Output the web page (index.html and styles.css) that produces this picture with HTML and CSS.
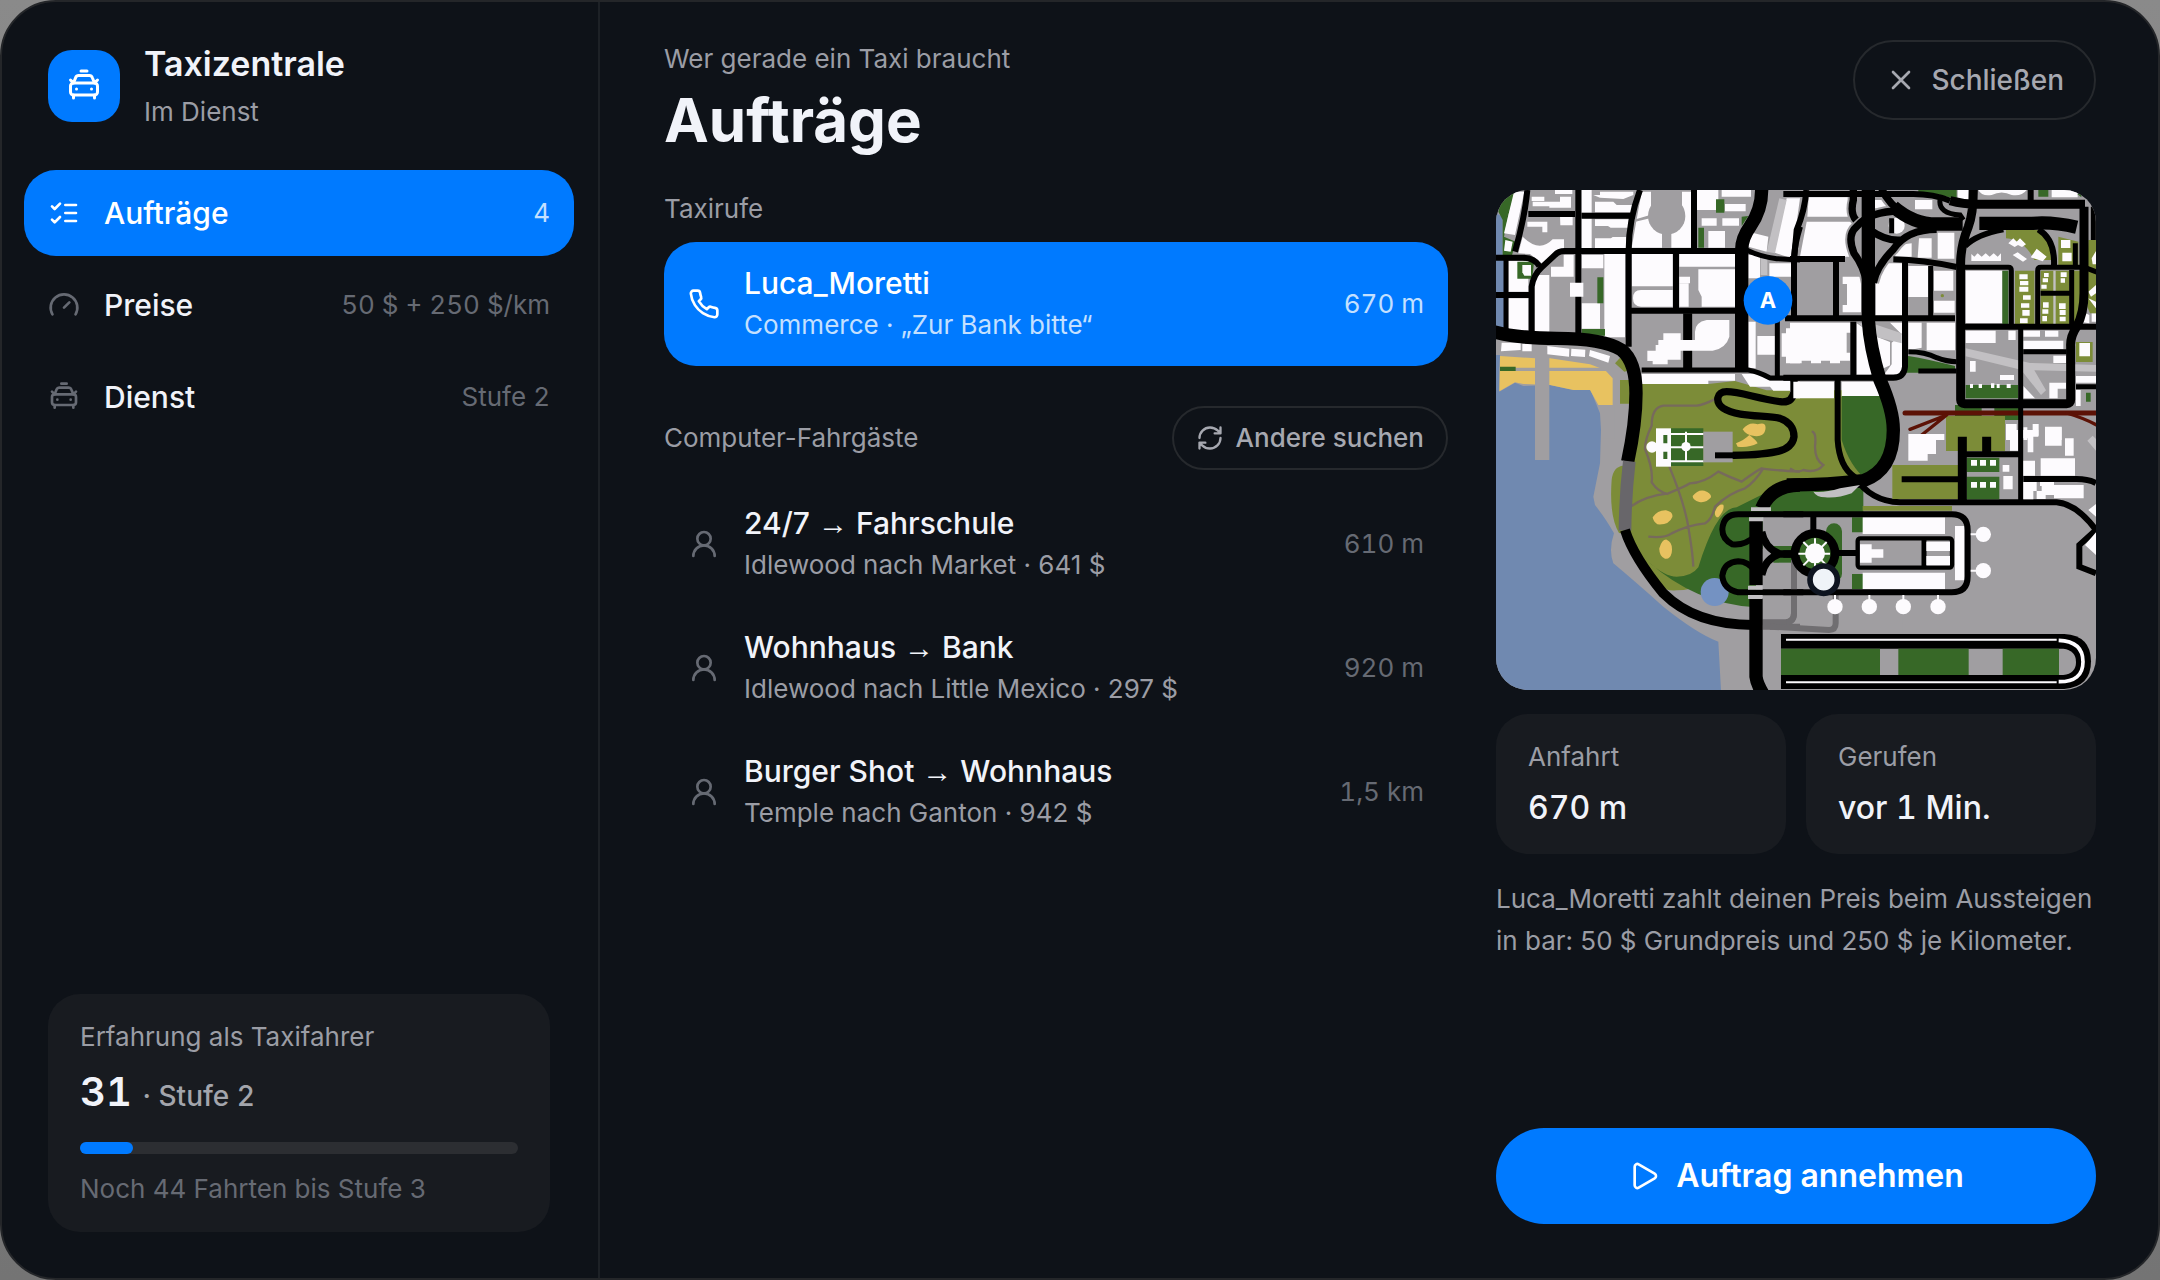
FILE: index.html
```html
<!DOCTYPE html>
<html lang="de">
<head>
  <meta charset="UTF-8" />
  <meta name="viewport" content="width=device-width, initial-scale=1.0"/>
  <title>Taxizentrale</title>
  <link rel="stylesheet" href="styles.css">
</head>
<body>

  <!-- shared icons -->
  <svg class="sprite" aria-hidden="true">
    <symbol id="i-taxi" viewBox="0 0 24 24"><path d="M10 2h4M21 8l-2 2-1.5-3.7A2 2 0 0 0 15.646 5H8.4a2 2 0 0 0-1.903 1.257L5 10 3 8M7 14h.01M17 14h.01M5 18v2M19 18v2"/><rect x="3" y="10" width="18" height="8" rx="2"/></symbol>
    <symbol id="i-list" viewBox="0 0 24 24"><path d="M3 17l2 2 4-4M3 7l2 2 4-4M13 6h8M13 12h8M13 18h8"/></symbol>
    <symbol id="i-gauge" viewBox="0 0 24 24"><path d="M12 14l4-4M3.34 19a10 10 0 1 1 17.32 0"/></symbol>
    <symbol id="i-phone" viewBox="0 0 24 24"><path d="M22 16.92v3a2 2 0 0 1-2.18 2 19.79 19.79 0 0 1-8.63-3.07 19.5 19.5 0 0 1-6-6 19.79 19.79 0 0 1-3.07-8.67A2 2 0 0 1 4.11 2h3a2 2 0 0 1 2 1.72 12.84 12.84 0 0 0 .7 2.81 2 2 0 0 1-.45 2.11L8.09 9.91a16 16 0 0 0 6 6l1.27-1.27a2 2 0 0 1 2.11-.45 12.84 12.84 0 0 0 2.81.7A2 2 0 0 1 22 16.92z"/></symbol>
    <symbol id="i-user" viewBox="0 0 24 24"><circle cx="12" cy="8" r="5"/><path d="M20 21a8 8 0 0 0-16 0"/></symbol>
    <symbol id="i-refresh" viewBox="0 0 24 24"><path d="M3 12a9 9 0 0 1 9-9 9.75 9.75 0 0 1 6.74 2.74L21 8M21 3v5h-5M21 12a9 9 0 0 1-9 9 9.75 9.75 0 0 1-6.74-2.74L3 16M8 16H3v5"/></symbol>
    <symbol id="i-close" viewBox="0 0 24 24"><path d="M18 6L6 18M6 6l12 12"/></symbol>
    <symbol id="i-play" viewBox="0 0 24 24"><path d="M5 5a2 2 0 0 1 3.008-1.728l11.997 6.998a2 2 0 0 1 .003 3.458l-12 7A2 2 0 0 1 5 19z"/></symbol>
  </svg>

  <div class="panel">
    <aside class="sidebar">
      <div class="brand">
        <div class="brand-logo"><svg class="icon icon-lg"><use href="#i-taxi"/></svg></div>
        <div>
          <div class="brand-name">Taxizentrale</div>
          <div class="brand-status">Im Dienst</div>
        </div>
      </div>

      <nav class="nav">
        <button type="button" class="nav-item active">
          <svg class="icon"><use href="#i-list"/></svg>
          <span class="nav-label">Aufträge</span>
          <span class="nav-value">4</span>
        </button>
        <button type="button" class="nav-item">
          <svg class="icon"><use href="#i-gauge"/></svg>
          <span class="nav-label">Preise</span>
          <span class="nav-value">50 $ + 250 $/km</span>
        </button>
        <button type="button" class="nav-item">
          <svg class="icon"><use href="#i-taxi"/></svg>
          <span class="nav-label">Dienst</span>
          <span class="nav-value">Stufe 2</span>
        </button>
      </nav>

      <div class="xp">
        <div class="xp-label">Erfahrung als Taxifahrer</div>
        <div class="xp-value">31 <small>· Stufe 2</small></div>
        <div class="xp-bar"><div class="xp-fill" style="width: 12%"></div></div>
        <div class="xp-hint">Noch 44 Fahrten bis Stufe 3</div>
      </div>
    </aside>

    <main class="main">
      <header class="head">
        <div>
          <p class="head-sub">Wer gerade ein Taxi braucht</p>
          <h1>Aufträge</h1>
        </div>
        <button type="button" class="btn-outline btn-close">
          <svg class="icon"><use href="#i-close"/></svg>
          Schließen
        </button>
      </header>

      <div class="columns">
        <section class="jobs">
          <h2>Taxirufe</h2>
          <button type="button" class="job active">
            <svg class="icon"><use href="#i-phone"/></svg>
            <span class="job-text">
              <span class="job-title">Luca_Moretti</span>
              <span class="job-sub">Commerce · „Zur Bank bitte“</span>
            </span>
            <span class="job-dist">670 m</span>
          </button>

          <div class="jobs-head">
            <h2>Computer-Fahrgäste</h2>
            <button type="button" class="btn-outline btn-refresh">
              <svg class="icon icon-sm"><use href="#i-refresh"/></svg>
              Andere suchen
            </button>
          </div>
          <button type="button" class="job">
            <svg class="icon"><use href="#i-user"/></svg>
            <span class="job-text">
              <span class="job-title">24/7 <span class="arrow">→</span> Fahrschule</span>
              <span class="job-sub">Idlewood nach Market · 641 $</span>
            </span>
            <span class="job-dist">610 m</span>
          </button>
          <button type="button" class="job">
            <svg class="icon"><use href="#i-user"/></svg>
            <span class="job-text">
              <span class="job-title">Wohnhaus <span class="arrow">→</span> Bank</span>
              <span class="job-sub">Idlewood nach Little Mexico · 297 $</span>
            </span>
            <span class="job-dist">920 m</span>
          </button>
          <button type="button" class="job">
            <svg class="icon"><use href="#i-user"/></svg>
            <span class="job-text">
              <span class="job-title">Burger Shot <span class="arrow">→</span> Wohnhaus</span>
              <span class="job-sub">Temple nach Ganton · 942 $</span>
            </span>
            <span class="job-dist">1,5 km</span>
          </button>
        </section>

        <section class="detail">
          <svg class="map" viewBox="0 0 1800 1500" preserveAspectRatio="xMidYMid slice" role="img" aria-label="Karte mit Abholort A">
            <rect class="land" width="1800" height="1500"/>

            <!-- coast, beach and parks -->
            <g transform="translate(-18 -30)">
              <path class="water" d="M18 100l20 10v115H18zM18 240h24v202H18zM18 525h12l-2 110 47-27 25 10 80-3 70 15 50-4 30 74 3 50-3 100-20 100 5 25q35 45 57 85-17 50-2 90 60 50 150 130 100 80 165 105l8 145v40H18z"/>
              <path class="sand" d="M30 528l106 7h44l120 18 45 17 23 25v80h-43l-25-45-50 0-70-15-80-3-25-5-47 27z"/>
              <path class="land" d="M75 563h280v10H75zM135 490h43v350h-43zM333 675h40v100h-40z"/>
              <path class="green" d="M30 560h47v13H30zM40 30h37L55 105 42 170l35 15-12 45H38V120L25 95z"/>
              <path class="olive" d="M375 550l18-20 30 40-20 5zM390 600h30v71h-30z"/>
              <path class="olive" d="M455 612h200l80-9 95 28h330v265l-240 5q-60 20-100 60-80 40-120 90-60 110-75 160-20 20-65 20-50 5-100-50l-60-120-13-2q-30-50-22-160 5-40 35-42l20-60z"/>
              <path class="green" d="M475 1145q50 45 85 45 45 0 65-28 55-180 115-180 60-30 120-60h260v80h100v105H798v175q-180-10-323-137z"/>
              <circle class="pond" cx="674" cy="1236" r="42"/>
              <path class="land" d="M818 1010h420v530H818zM798 1330h80v210h-80z"/>
              <path class="sand" d="M758 748q20-25 45-15 30-10 22 20-5 18-32 15-25-2-35-20zM738 790q25-10 40-25 20 15 25 25-30 15-60 10zM608 948q15-20 35-16 22 8 20 20-15 18-35 14-20-6-20-18zM488 1012q15-22 40-21 22 5 19 20-10 25-45 22-12-8-14-21zM508 1105q8-28 22-26 20 8 15 40-5 20-20 17-18-8-17-31zM675 995q10-25 25-21 5 15-15 38-12 0-10-17z"/>
              <path class="trail" d="M680 655q-40 20-60 22h-100q-35 5-35 60-20 40-20 70 25 60 20 100 20 30 50 35M425 978q40-30 110-38 50-20 65-30 40 0 85-35 30 15 70 30 40-30 60-40 20 5 115 10M475 1070q50 5 70-10 50-25 100-30 20-10 30-50 40-40 90-55 30-20 55-60M538 860q50 120 60 200 10 60 12 100"/>
              <path class="trail" d="M965 755q15 0 10 45 0 40 25 55-20 25-60 15-20 10-40-5"/>
            </g>

            <!-- north-west blocks -->
            <g transform="translate(-18 -30)">
              <path class="block" d="M72 35h31L75 165l-33-5zM46 180l22 5-6 30-20-3zM125 50h38v13h-38zM128 65h50v14h-50zM195 30h52v12h-52zM178 65h32V50h33v33h-65zM275 30h30v68h-30zM310 45h20V35h100v10l-30 12-70-4zM315 65h55l10 10h50v22H315zM275 115h30v90h-30zM315 118h102v25h-55l-8-5h-39zM315 175h48l5-4h40v34H315z"/>
              <path class="block" d="M112 125h60v32h-15v-17h-45zM210 108h38v28h-37zM98 170q50 50 90 8h34v27l-17 10-50 35-35-28-35-2z"/>
              <path class="block" d="M455 35h150v168H425l15-85zM620 30h65v60h-65zM695 30h88v20h-88zM705 72h62v22h-62zM635 115h45v22h-45zM697 115h50v22h-50zM655 153h50v50h-50z"/>
              <path class="block" d="M55 243h60v92H55zM55 355h60v96H55zM133 285h45v170h-45zM183 260h38v30h-38zM221 225h30v65h-30zM275 225h65v40h-65zM275 370h55v76h-55zM343 222h62v250h-62z"/>
              <path class="block" d="M425 222h123v97H425zM548 330v50h-95q-24 0-24-25t24-25zM568 222h167v38H568zM625 268h110v112H635v-30l-10-20zM568 290h32v20h-32z"/>
              <path class="block" d="M568 310h28v70h-28zM775 155l60 15-5 45-55-15zM890 55h40l-25 180-55-18zM775 225h35v70h-35zM838 250h65v40h-65zM775 425h22v140h-22zM802 468h53v56h-53zM888 445h42v105h-42v-20h-13v-70h13zM455 582h200v30H455zM655 582h80v20h-80zM755 582h70l15 20h60v30h-50l-10-12h-60zM900 605h30v50h-30z"/>
              <path class="block" d="M35 488h57v22l-59 4zM97 492h28v22H97zM172 498l66 8-1 24-65-7zM244 506l42 3-1 22-42-3zM300 510l60 18-5 20-58-20z"/>
              <circle class="land" cx="530" cy="108" r="56"/>
              <path class="land" d="M483 30h93v78h-93zM516 150h28v55h-28zM430 120l50-15v10l-50 12z"/>
              <path class="light" d="M868 55l22 5-35 160-25-5zM812 225h20v60h-20z"/>
              <path class="green" d="M678 58h25v40h-25zM625 143h17v60h-17zM82 245h50l-5 51H82zM322 292h18v78h-18zM275 447h70v20h-70zM755 110l20-2-20 30z"/>
              <path class="block" d="M97 255h26v32h-20l-6-10z"/>
              <g class="road">
                <path d="M112 30Q105 110 75 215M265 30v435M450 30q-34 90-34 180v290M612 30v175M558 215v175M125 455V320q5-35 30-58l40-37q10-12 30-12h535M18 233h80q35 0 50 25M18 345h105M115 102h140M275 107h160M425 392h310M930 140q-18 60-18 100v170"/>
                <path class="w14" d="M48 235v220M862 420v170M770 210q40 20 90 26l70 4M455 570h320q30 5 65 24h90"/>
                <path class="w28" d="M593 400v165"/>
                <path class="w40" d="M815 30q0 60-35 110-25 35-25 70v365"/>
                <path class="w40" d="M10 455q70 20 190 20 140 0 195 35 43 35 43 130 0 90-25 205"/>
                <path class="w20" d="M912 590v45q-5 35-42 30c-70-10-120-30-160-30-32 0-35 32-10 50 40 27 130 20 170 30q42 15 42 55-5 35-52 45-60 13-185 11"/>
              </g>
              <path class="block" d="M240 308h40v42h-40zM520 460h52v20h43v-25q0-28 35-35h68v50q-10 35-50 42h-96v27h-39v14h-45v-10h-16v-31h25v-17h8v-15h15z"/>
            </g>

            <!-- park villa and southern highway -->
            <g transform="translate(-18 720)">
              <path class="block" d="M498-5h45v115h-45z"/>
              <circle class="block" cx="486" cy="51" r="17"/>
              <path class="green" d="M543-5h97v113h-97zM520 15h12v25h-12zM520 65h12v22h-12z"/>
              <path class="trace" d="M543 12h98M543 52h98M543 94h98M588 5v90"/>
              <circle class="block" cx="588" cy="50" r="14"/>
              <path class="land" d="M640 5h88v92h-88z"/>
              <path class="road" d="M675 76h60"/>
              <path class="green" d="M850 348h80v50h-80z"/>
              <path class="tunnel" d="M418 94q-12 100-13 208"/>
              <path class="service" d="M818 590h112M912 390v160q0 25-25 27h-70"/>
              <g class="road">
                <path class="w30" d="M405 300q25 80 115 190 95 95 270 95"/>
                <path class="w40" d="M798 270v195M798 505v235q2 20 20 50M930 165q-85 0-115 70"/>
                <path d="M940 253H745q-45 0-48 45 0 30 30 45 35 5 70-25M940 487H745q-45-10-48-50 5-40 48-43 30 0 50 30"/>
                <path class="w20" d="M815 305q10 50 55 67h70M815 435q10-50 55-63"/>
              </g>
              <path class="light" d="M783 232h60v11h-60zM777 262h43v12h-43zM774 467h44v12h-44zM774 495h44v12h-44z"/>
            </g>

            <!-- north-east blocks -->
            <g transform="translate(882 -30)">
              <path class="block" d="M56 52h125v58H52zM50 125h140l-12 105H30zM158 290h55v107h-55v-22h13v-63h-13zM258 250h78v157h-78zM355 258h60v93h-60zM432 272h58v60h-58zM432 362h62v36h-62zM387 175h38v58h-42zM443 158h50v78h-50zM325 195l40-5v40h-60zM375 60h52v28h-52zM255 60h35l20 35-55-10zM503 30h32v30h-32zM565 30h145q-15 20-45 15-30-15-60 0-30 5-40-15zM785 30h78v22h-78z"/>
              <circle class="block" cx="320" cy="137" r="24"/>
              <path class="block" d="M527 272h110v157H527zM0 428h182v30h-12v60h10v24h-30v8h-30v-8H93v8H63v-8H35v8H0zM200 430l60 40 40 16v70l-60 28h-40zM300 428h38v155h-55l22-30v-65l30-25zM355 428h40v75l-40 8zM410 428h85v83h-85zM527 452h90v37h-90zM655 452h22v28h-22zM700 452h50v18h-50zM765 452h40v18h-40zM700 482h120v25H700zM790 527h38v22h-38zM540 543h17v32h-17zM630 585h42v15h-42z"/>
              <path class="block" d="M700 618l35 37h-35zM778 608h50v18h-25v29h-25zM858 588h60v20h-60zM858 630h14v48h-14zM10 605h122v50H10zM155 605h112v45H155zM868 425l10-30 20 10v25zM905 425h13v-25h-13z"/>
              <path class="green" d="M385 30h115v28l-60-16h-55zM745 30h30v20h-30zM637 272h18v160h-18zM355 528q60 10 140 30v20H343v-45zM527 615h157v40H527zM155 648h130q30 70 20 132-10 60-75 120-50-40-75-120zM495 675h80v45h-80zM613 675h75v45h-75zM888 638h14v27h-14zM862 42h12v10z"/>
              <path class="olive" d="M648 150h95q50 40 40 90h-50q-30-60-85-65zM675 272h58v160h-58zM752 272h86v160h-86zM805 170l60 15v70h-60zM852 272h20v110l-20 50zM895 180h30v220h-25l-8-20V270zM858 486h50v60h-50zM468 708h177v105H468z"/>
              <path class="block" d="M655 190l15-15 10 10 10-10 18 18-12 8-12-6-10 6zM668 225l15-8 28 20-12 8zM722 232l18-26 30 24-12 14zM813 180h28v24h-28zM817 218h28v26h-28zM544 222l9 8 10-10 12 10 12-10 12 10 12-10 12 10 10-10v23h-89z"/>
              <path class="block" d="M688 283h25v15h-25zM690 303h25v13h-25zM688 320h27v15h-27zM699 346h23v13h-23zM693 370h25v13h-25zM697 390h22v17h-22zM690 415h23v15h-23zM762 279h14v12h-14zM758 295h16v12h-16zM754 314h16v12h-16zM812 277h18v14h-18zM812 295h13v13h-13zM759 367h17v16h-17zM757 388h18v13h-18zM757 408h14v16h-14zM807 370h20v17h-20zM809 390h18v15h-18zM809 410h18v14h-18zM868 489h32v40h-32zM895 335l23-20v25l-15 10zM895 355l23 10v20zM905 235l13-22v40l-10 0z"/>
              <path class="block" d="M540 612h9v12h-9zM566 612h10v12h-10zM603 610h10v14h-10zM620 612h9v12h-9zM650 612h12v12h-12zM648 732h32v48h-32zM700 742h12v38h-12zM728 732h18v35h-18zM765 742h50v38h-50z"/>
              <circle class="olive" cx="457" cy="347" r="5"/>
              <path class="light" d="M527 505l193 44 198 6v20l-185-4 35 60-15 14-60-76-166-40zM205 430h40l90 30v30l-80-20zM790 272h7v160h-7z"/>
              <g class="rail">
                <path class="w14" d="M345 699h573"/>
                <path d="M470 705l-110 43M470 705l-75 60M830 699q50 15 88 35"/>
              </g>

              <!-- motorway junction -->
              <g class="ramp">
                <path d="M190 20v40q-10 40 8 60M330 93q-90 0-130 47-30 25-8 80 30 40 38 90M440 148q-90 0-130 60-50 50-60 100M275 25q20 50 70 75M240 150q50 35 95 30"/>
              </g>
              <g class="road">
                <path class="w20" d="M190 20v40q-10 40 8 60M330 93q-90 0-130 47-30 25-8 80 30 40 38 90M440 148q-90 0-130 60-50 50-60 100M275 25q20 50 70 75M240 150q50 35 95 30"/>
                <path class="w40" d="M235 25v395q5 80 35 180 40 90 40 150 0 120-90 152-100 13-230 13"/>
                <path class="w40" d="M310 80q60 52 130 52h78M568 130h160q60-5 132 12"/>
                <path d="M-20 42h390q60 0 110 20M0 237h165M310 238q90 2 190 23M-15 415h510M510 440h408M138 245v165M345 245v315q-3 33-35 33H-20M190 425v165M722 30v40M640 148q-80 15-115 50M745 148q50 30 47 107M143 600v180q5 80 50 110 50 75 137 77h470q60 5 118 83l-50 45v65l50 20M49 30Q45 90 20 150L12 240v170"/>
                <path class="w28" d="M550 30q0 70-15 110-25 60-23 120v400q0 11 12 11h306q12 0 12-12V500q-2-30 18-60 22-40 22-100V80M480 62q40 11 80 11h325"/>
                <path class="w14" d="M422 258v150M692 440v525M700 515h130M858 620h60M845 270v170M752 340h90M525 262h130q9 0 9 10v160M743 432V272q0-10 10-10h130l40 15M450 60q-5 40 60 45l10 15M355 515q50 0 85 18 30 12 60 12M385 573h115M305 115v45M856 190v70M910 80v100"/>
              </g>
            </g>

            <!-- airport and south-east blocks -->
            <g transform="translate(882 720)">
              <path class="olive" d="M307 105h198v102H307zM218 228h268v14H218z"/>
              <path class="block" d="M355 12h108v18h-25v42h-25v20h-58zM660 0h24v62h-24zM700 0h45v20h-15v47h-17V25h-13zM765-10h50v57h-50zM825 25h26v52h-26zM638 105h20v20h-20zM640 138h28v40h-28zM700 92h35v45h-35zM752 85h103v52H752zM700 155h40v28h-10v25h-30zM740 183h15v-15h-5v-13h42v10h89v40h-89v-10h-25v12h-27z"/>
              <path class="green" d="M530 83h98v43h-98zM530 140h98v68h-98z"/>
              <path class="block" d="M543 90h18v17h-18zM570 90h18v17h-18zM600 90h18v17h-18zM543 156h18v17h-18zM570 156h18v17h-18zM600 156h18v17h-18z"/>
              <path class="light" d="M892 32l16-15 10 10v35zM70 185q30 5 80-10l60-10-25 25q-40 15-80 12-25 0-35-17z"/>
              <path class="block" d="M885 345l33-38v68zM895 240l23-18v38z"/>
              <path class="green" d="M186 262h33v45h-33zM186 432h33v45h-33z"/>
              <rect class="green" x="108" y="280" width="48" height="175" rx="24"/>
              <path class="block" d="M218 262h247v50H218zM218 428h247v50H218zM495 288h28v163h-28z"/>
              <path class="service" d="M137 495v85q0 20-20 20L-60 590M12 400v150q0 25-22 27"/>
              <g class="road">
                <path d="M335 148h175M525 73h165M700 147h160q35 0 58 12M-20 253h505q48 0 48 48v138q0 48-48 48H-20M145 369h60M70 260v50"/>
                <path class="w28" d="M517 20v195M590 20v50"/>
                <path class="w14" d="M402 325v88"/>
                <path class="w20" d="M-20 372h40"/>
              </g>
              <rect class="terminal" x="203" y="325" width="283" height="88" rx="8"/>
              <path class="road w14" d="M402 325v88"/>
              <path class="block" d="M210 343h35v15h35v25h-35v15h-35zM409 335h71v28h-71zM409 378h71v28h-71z"/>
              <circle class="roundabout" cx="75" cy="370" r="60"/>
              <path class="trace" d="M75 325v90M25 371h95M40 336l70 70M40 406l70-70"/>
              <circle class="block" cx="75" cy="370" r="30"/>
              <path class="trace" d="M542 313h20M542 422h20M135 495v20M238 495v20M340 495v20M444 495v20"/>
              <g class="block">
                <circle cx="580" cy="313" r="23"/><circle cx="580" cy="422" r="23"/>
                <circle cx="135" cy="530" r="23"/><circle cx="238" cy="530" r="23"/>
                <circle cx="340" cy="530" r="23"/><circle cx="444" cy="530" r="23"/>
              </g>
              <path class="tarmac" d="M-27 612h850q80 5 80 82t-80 83H-27z"/>
              <path class="land" d="M-27 656h847q38 5 38 40t-38 39H-27z"/>
              <path class="green" d="M-27 656h297v79H-27zM325 656h211v79H325zM638 656h169v79H638z"/>
              <path class="trace" d="M-12 629h812M-12 757h812"/>
              <path class="trace wide" d="M806 631q73 3 73 64t-73 60"/>
            </g>

            <!-- own position and pick-up point -->
            <circle class="pin-me" cx="983" cy="1169" r="41"/>
            <circle class="pin-a" cx="816" cy="331" r="73"/>
            <text class="pin-label" x="816" y="354">A</text>
          </svg>

          <dl class="stats">
            <div class="stat">
              <dt>Anfahrt</dt>
              <dd>670 m</dd>
            </div>
            <div class="stat">
              <dt>Gerufen</dt>
              <dd>vor 1 Min.</dd>
            </div>
          </dl>

          <p class="note">Luca_Moretti zahlt deinen Preis beim Aussteigen in bar: 50 $ Grundpreis und 250 $ je Kilometer.</p>

          <button type="button" class="btn-accept">
            <svg class="icon"><use href="#i-play"/></svg>
            Auftrag annehmen
          </button>
        </section>
      </div>
    </main>
  </div>

</body>
</html>
```
FILE: styles.css
```css
* {
  box-sizing: border-box;
}
body {
  margin: 0;
  background: linear-gradient(#8a8a8a, #747474);
  color: #f1f3f9;
  font-family: Inter, 'Liberation Sans', sans-serif;
  font-size: 26px;
  line-height: 36px;
}
h1, h2, p, dl, dd {
  margin: 0;
}
button {
  font: inherit;
  color: inherit;
  background: none;
  border: none;
  cursor: pointer;
}
.sprite {
  position: absolute;
  width: 0;
  height: 0;
}
.icon {
  width: 32px;
  height: 32px;
  flex: none;
  fill: none;
  stroke: currentColor;
  stroke-width: 2;
  stroke-linecap: round;
  stroke-linejoin: round;
}
.icon-lg {
  width: 36px;
  height: 36px;
}
.icon-sm {
  width: 28px;
  height: 28px;
}

.panel {
  display: grid;
  grid-template-columns: 598px 1fr;
  min-height: 100vh;
  background: #0e1218;
  border: 2px solid #242629;
  border-radius: 56px;
  overflow: hidden;
}

/* sidebar */
.sidebar {
  display: flex;
  flex-direction: column;
  padding: 36px 24px 46px 22px;
  border-right: 2px solid #1d2126;
}
.brand {
  display: flex;
  align-items: center;
  gap: 24px;
  padding: 0 24px;
  margin-bottom: 36px;
}
.brand-logo {
  display: flex;
  align-items: center;
  justify-content: center;
  width: 72px;
  height: 72px;
  border-radius: 24px;
  background: #007aff;
  color: #fff;
}
.brand-name {
  font-size: 34px;
  font-weight: 600;
  line-height: 52px;
}
.brand-status {
  color: #9b9da5;
  line-height: 44px;
}
.nav {
  display: flex;
  flex-direction: column;
  gap: 6px;
}
.nav-item {
  display: flex;
  align-items: center;
  gap: 24px;
  height: 86px;
  padding: 0 24px;
  border-radius: 32px;
  color: #666a73;
}
.nav-label {
  flex: 1;
  text-align: left;
  font-size: 30px;
  font-weight: 500;
  color: #f1f3f9;
}
.nav-value {
  font-variant-numeric: tabular-nums;
}
.nav-item.active {
  background: #007aff;
  color: #fff;
}
.nav-item.active .nav-label {
  color: #fff;
}
.nav-item.active .nav-value {
  color: #c4e0ff;
}
.xp {
  margin: auto 24px 0;
  padding: 24px 32px;
  border-radius: 32px;
  background: #181b20;
}
.xp-label {
  color: #9b9da5;
  line-height: 38px;
}
.xp-value {
  margin-top: 6px;
  font-size: 40px;
  font-weight: 600;
  line-height: 60px;
  font-variant-numeric: tabular-nums;
}
.xp-value small {
  font-size: 28px;
  font-weight: 500;
  line-height: 1;
  color: #a3a5ac;
}
.xp-bar {
  height: 12px;
  margin: 20px 0 16px;
  border-radius: 6px;
  background: #2c2e32;
}
.xp-fill {
  height: 100%;
  border-radius: 6px;
  background: #007aff;
}
.xp-hint {
  color: #666a73;
  line-height: 38px;
}

/* main area */
.main {
  display: flex;
  flex-direction: column;
  padding: 38px 62px 54px 64px;
}
.head {
  display: flex;
  justify-content: space-between;
  align-items: flex-start;
  margin-bottom: 28px;
}
.head-sub {
  color: #9b9da5;
  line-height: 38px;
}
h1 {
  font-size: 60px;
  font-weight: 700;
  line-height: 84px;
}
h2 {
  font-size: 26px;
  font-weight: 400;
  line-height: 38px;
  color: #9b9da5;
}
.btn-outline {
  display: flex;
  align-items: center;
  border: 2px solid #26292d;
  border-radius: 40px;
  color: #a6a8b0;
  font-weight: 500;
}
.btn-close {
  gap: 14px;
  height: 80px;
  padding: 0 30px;
  font-size: 28px;
}
.btn-refresh {
  gap: 12px;
  height: 64px;
  padding: 0 22px;
}
.columns {
  display: grid;
  grid-template-columns: 1fr 600px;
  gap: 48px;
  flex: 1;
}
.jobs {
  display: flex;
  flex-direction: column;
}
.jobs-head {
  display: flex;
  align-items: center;
  justify-content: space-between;
  margin: 40px 0 12px;
}
.job {
  display: flex;
  align-items: center;
  gap: 24px;
  height: 124px;
  padding: 0 24px;
  border-radius: 32px;
  color: #666a73;
}
.job-text {
  flex: 1;
  text-align: left;
}
.job-title {
  display: block;
  font-size: 30px;
  font-weight: 500;
  line-height: 42px;
  color: #f1f3f9;
}
.arrow {
  font-family: 'Liberation Sans', sans-serif;
  line-height: 1;
}
.job-sub {
  display: block;
  line-height: 42px;
  color: #9b9da5;
}
.job-dist {
  font-variant-numeric: tabular-nums;
}
.job.active {
  margin-top: 14px;
  background: #007aff;
  color: #fff;
}
.job.active .job-title {
  color: #fff;
}
.job.active .job-sub,
.job.active .job-dist {
  color: #c4e0ff;
}

/* job detail */
.detail {
  display: flex;
  flex-direction: column;
}
.stats {
  display: grid;
  grid-template-columns: 1fr 1fr;
  gap: 20px;
  margin: 24px 0;
}
.stat {
  padding: 24px 32px 22px;
  border-radius: 32px;
  background: #181b20;
}
.stat dt {
  color: #9b9da5;
  line-height: 38px;
}
.stat dd {
  margin-top: 8px;
  font-size: 32px;
  font-weight: 500;
  line-height: 48px;
  font-variant-numeric: tabular-nums;
}
.note {
  color: #9b9da5;
  line-height: 42px;
}
.btn-accept {
  display: flex;
  align-items: center;
  justify-content: center;
  gap: 16px;
  height: 96px;
  margin-top: auto;
  border-radius: 48px;
  background: #007aff;
  color: #fff;
  font-size: 32px;
  font-weight: 600;
}

/* map */
.map {
  display: block;
  width: 100%;
  aspect-ratio: 6 / 5;
  border-radius: 32px;
}
.land { fill: #a09ea1; }
.water { fill: #7089b0; }
.pond { fill: #7492c2; }
.sand { fill: #e8c260; }
.olive { fill: #7c8c38; }
.green { fill: #376827; }
.block { fill: #fdfbfe; }
.light { fill: #c2c0c3; }
.tarmac { fill: #000; }
.road,
.ramp,
.rail,
.trail,
.trace,
.tunnel,
.service {
  fill: none;
  stroke-width: 18;
}
.road { stroke: #000; }
.ramp { stroke: #a09ea1; stroke-width: 34; }
.rail { stroke: #5c1206; stroke-width: 10; stroke-linecap: round; }
.trail { stroke: #776a5c; stroke-width: 7; }
.trace { stroke: #fdfbfe; stroke-width: 6; }
.wide { stroke-width: 11; }
.tunnel { stroke: #68666a; stroke-width: 38; }
.service { stroke: #706e71; }
.w14 { stroke-width: 15; }
.w20 { stroke-width: 22; }
.w28 { stroke-width: 27; }
.w30 { stroke-width: 30; }
.w40 { stroke-width: 40; }
.terminal {
  fill: #a09ea1;
  stroke: #000;
  stroke-width: 13;
}
.roundabout {
  fill: #376827;
  stroke: #000;
  stroke-width: 26;
}
.pin-me {
  fill: #eff3f8;
  stroke: #0e1420;
  stroke-width: 17;
}
.pin-a { fill: #007aff; }
.pin-label {
  fill: #fff;
  font-size: 66px;
  font-weight: 700;
  text-anchor: middle;
}
```
